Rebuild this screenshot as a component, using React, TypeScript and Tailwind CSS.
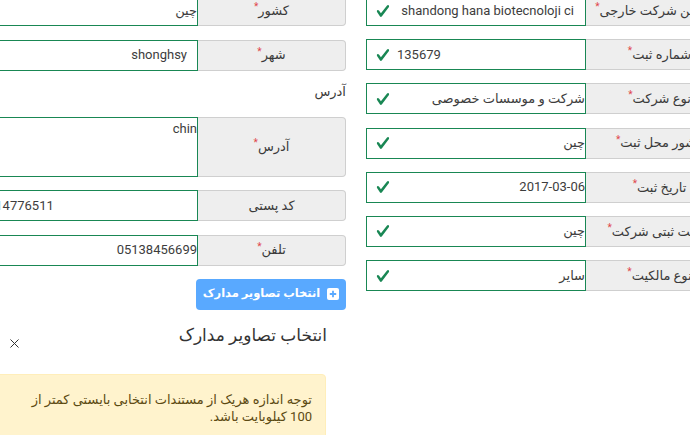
import { X } from "lucide-react";

type Field = {
  label: string;
  value: string;
  req?: boolean;
  check?: boolean;
  ltr?: boolean;
  valueCls?: string;
  tall?: boolean;
};

const rightFields: Field[] = [
  { label: "نام لاتین شرکت خارجی", value: "shandong hana biotecnoloji ci", req: true, check: true, ltr: true, valueCls: "text-right pr-[11px]" },
  { label: "شماره ثبت", value: "135679", req: true, check: true, ltr: true, valueCls: "text-left pl-[30px]" },
  { label: "نوع شرکت", value: "شرکت و موسسات خصوصی", req: true, check: true },
  { label: "کشور محل ثبت", value: "چین", req: true, check: true },
  { label: "تاریخ ثبت", value: "2017-03-06", req: true, check: true, ltr: true, valueCls: "text-right" },
  { label: "تابعیت ثبتی شرکت", value: "چین", req: true, check: true },
  { label: "نوع مالکیت", value: "سایر", req: true, check: true },
];

function Check() {
  return (
    <svg
      viewBox="0 0 8 8"
      preserveAspectRatio="none"
      className="absolute left-[9px] top-1/2 h-[16px] w-[14px] -translate-y-1/2"
    >
      <path
        fill="#198754"
        d="M2.3 6.73L.6 4.53c-.4-1.04.46-1.4 1.1-.8l1.1 1.4 3.4-3.8c.6-.63 1.6-.27 1.2.7l-4 4.6c-.43.5-.8.4-1.1.1z"
      />
    </svg>
  );
}

function Row({ f, className = "" }: { f: Field; className?: string }) {
  return (
    <div className={`flex ${f.tall ? "h-[60px]" : "h-[31px]"} ${className}`}>
      {/* label (input-group-text) */}
      <div className="flex w-[148px] shrink-0 items-center justify-center whitespace-nowrap rounded-r-[4px] border border-l-0 border-[#cfcfcf] bg-[#eeeeee] text-[13px] text-[#3a3a3a]">
        {f.label}
        {f.req && <span className="relative -top-[4px] text-[10px] text-[#e0464a]">*</span>}
      </div>
      {/* input */}
      <div
        className={`relative flex w-[220px] shrink-0 border border-[#198754] bg-white text-[13px] text-[#3d3d3d] ${
          f.tall ? "items-start" : "items-center"
        }`}
      >
        {f.check && <Check />}
        <div
          dir={f.ltr ? "ltr" : "rtl"}
          className={`w-full overflow-hidden whitespace-nowrap leading-[18px] ${f.valueCls ?? "text-right"}`}
        >
          {f.value}
        </div>
      </div>
    </div>
  );
}

function PlusSquare() {
  return (
    <svg viewBox="0 0 12 12" className="h-[12px] w-[12px] shrink-0">
      <rect x="0" y="0" width="12" height="12" rx="2" fill="#ffffff" />
      <path d="M6 2.8v6.4M2.8 6h6.4" stroke="#59a9ff" strokeWidth="1.8" />
    </svg>
  );
}

export default function App() {
  return (
    <div className="relative h-[435px] w-[690px] overflow-hidden bg-white font-['Roboto','DejaVu_Sans',sans-serif]">
      <div dir="rtl" className="ml-[-22px] mt-[-5px] flex w-[756px] items-start gap-[20px]">
        {/* right column */}
        <div className="flex w-[368px] flex-col gap-[13.2px]">
          {rightFields.map((f) => (
            <Row key={f.label} f={f} />
          ))}
        </div>

        {/* left column */}
        <div className="flex w-[368px] flex-col">
          <Row f={{ label: "کشور", value: "چین", req: true }} className="mb-[13.5px]" />
          <Row
            f={{ label: "شهر", value: "shonghsy", req: true, valueCls: "text-right pr-[10px]" }}
            className="mb-[13px]"
          />
          <div className="mb-[16px] -mt-[2px] text-right text-[13px] leading-[19px] text-[#3a3a3a]">آدرس</div>
          <Row
            f={{ label: "آدرس", value: "chin", req: true, tall: true, valueCls: "text-right pt-[2px]" }}
            className="mb-[13.5px]"
          />
          <Row
            f={{ label: "کد پستی", value: "914776511", ltr: true, valueCls: "text-left pl-[9px]" }}
            className="mb-[13.6px]"
          />
          <Row
            f={{ label: "تلفن", value: "05138456699", req: true, ltr: true, valueCls: "text-right" }}
            className="mb-[13px]"
          />
          <div className="flex">
            <button className="flex h-[31px] w-[150px] items-center justify-center gap-[7px] whitespace-nowrap rounded-[4px] bg-[#59a9ff] text-[11.5px] font-bold text-white">
              <PlusSquare />
              انتخاب تصاویر مدارک
            </button>
          </div>

          {/* modal-like section */}
          <div className="mt-[14px] flex items-start justify-between pr-[19px] pl-[29px]">
            <div className="text-[17px] leading-[22px] text-[#333]">انتخاب تصاویر مدارک</div>
            <X className="mt-[12px] h-[15px] w-[15px] text-[#333]" strokeWidth={1.6} />
          </div>
          <div className="mr-[20px] mt-[23px] h-[80px] rounded-[4px] border border-[#ffeeba] bg-[#fff3cd] pt-[16px] pr-[13px] text-right text-[13px] leading-[17px] text-[#5c4a12]">
            <div className="whitespace-nowrap">توجه اندازه هریک از مستندات انتخابی بایستی کمتر از</div>
            <div className="whitespace-nowrap">100 کیلوبایت باشد.</div>
          </div>
        </div>
      </div>
    </div>
  );
}
